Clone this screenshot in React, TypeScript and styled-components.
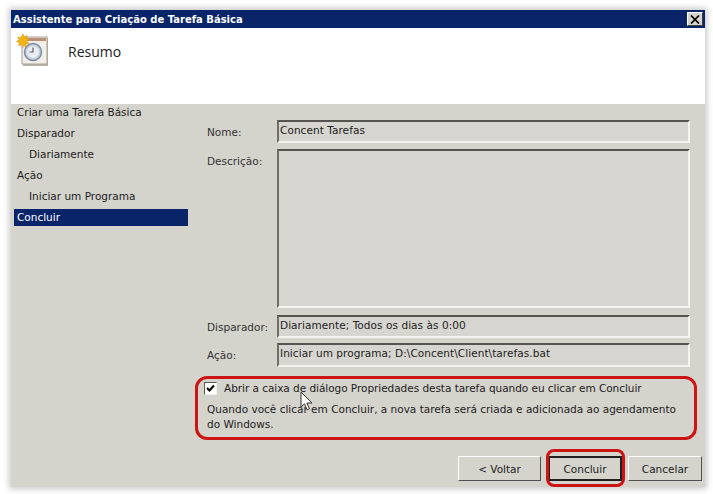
import React from 'react';
import styled, { createGlobalStyle } from 'styled-components';

const GlobalStyle = createGlobalStyle`
  html, body {
    margin: 0;
    padding: 0;
    background: #fff;
  }
  body {
    font-family: 'DejaVu Sans', Verdana, sans-serif;
    font-size: 10.5px;
    color: #1c1c1c;
  }
`;

const Page = styled.div`
  width: 713px;
  height: 494px;
  box-sizing: border-box;
  padding: 10px 8px 7px 11px;
  overflow: hidden;
`;

const Window = styled.div`
  position: relative;
  height: 100%;
  display: flex;
  flex-direction: column;
  background: #d4d3cc;
  box-shadow: 0 0 6px 2px rgba(120, 120, 120, 0.4);
`;

const TitleBar = styled.div`
  height: 18px;
  flex: none;
  display: flex;
  align-items: center;
  justify-content: space-between;
  padding: 0 2px;
  background: #0a246a;
  color: #fff;
  font-weight: bold;
  font-size: 10px;
`;

const CloseButton = styled.div`
  width: 16px;
  height: 14px;
  display: flex;
  align-items: center;
  justify-content: center;
  background: #d4d3cc;
  border: 1px solid;
  border-color: #fff #404040 #404040 #fff;
  box-sizing: border-box;
`;

const Header = styled.div`
  height: 76px;
  flex: none;
  display: flex;
  align-items: flex-start;
  background: #fff;
  padding: 6px 0 0 5px;
  box-sizing: border-box;
`;

const HeaderTitle = styled.div`
  margin: 8px 0 0 20px;
  font-family: 'Open Sans', sans-serif;
  font-size: 14px;
  color: #222;
`;

const Body = styled.div`
  flex: 1;
  display: flex;
  min-height: 0;
`;

const Sidebar = styled.ul`
  width: 174px;
  flex: none;
  margin: 0 0 0 3px;
  padding: 0;
  list-style: none;
  display: flex;
  flex-direction: column;
  gap: 4px;
`;

const SidebarItem = styled.li<{ $sub?: boolean; $active?: boolean }>`
  height: 17px;
  line-height: 17px;
  padding-left: ${(p) => (p.$sub ? 15 : 3)}px;
  background: ${(p) => (p.$active ? '#0a246a' : 'transparent')};
  color: ${(p) => (p.$active ? '#fff' : '#1c1c1c')};
`;

const Content = styled.div`
  flex: 1;
  min-width: 0;
  padding: 16px 15px 0 19px;
  display: flex;
  flex-direction: column;
`;

const FormRow = styled.div<{ $gap: number; $height: number }>`
  display: grid;
  grid-template-columns: 70px 1fr;
  height: ${(p) => p.$height}px;
  margin-bottom: ${(p) => p.$gap}px;
`;

const Label = styled.div`
  padding-top: 6px;
  color: #333;
`;

const Field = styled.div`
  box-sizing: border-box;
  height: 100%;
  padding: 1px 1px;
  background: #d6d5cf;
  border: 2px solid;
  border-color: #55554f #f4f3ef #f4f3ef #6e6e68;
  line-height: 14px;
  color: #222;
  white-space: nowrap;
  letter-spacing: 0.06px;
`;

const Options = styled.div`
  margin-top: 13px;
`;

const CheckRow = styled.div`
  display: flex;
  align-items: center;
  gap: 7px;
  height: 16px;
  margin-left: -3px;
`;

const CheckBox = styled.div`
  width: 13px;
  height: 13px;
  box-sizing: border-box;
  background: #fff;
  border: 1px solid;
  border-color: #5a5a55 #eee #eee #5a5a55;
  display: flex;
  align-items: center;
  justify-content: center;
`;

const CheckLabel = styled.span`
  letter-spacing: -0.04px;
`;

const Note = styled.p`
  margin: 6px 0 0;
  line-height: 15px;
  width: 480px;
`;

const Footer = styled.div`
  padding: 0 3px 6px 0;
  display: flex;
  justify-content: flex-end;
  position: absolute;
  right: 0;
  bottom: 0;
`;

const Buttons = styled.div`
  display: flex;
  gap: 6px;
`;

const Button = styled.button<{ $primary?: boolean; $width: number }>`
  width: ${(p) => p.$width}px;
  height: 25px;
  margin-left: ${(p) => (p.$primary ? 1 : 0)}px;
  padding: 0;
  background: #d4d3cc;
  font: inherit;
  color: #222;
  box-sizing: border-box;
  border: ${(p) => (p.$primary ? '2px' : '1px')} solid;
  border-color: ${(p) => (p.$primary ? '#202020' : '#fff #505050 #505050 #fff')};
`;

const Highlight = styled.div<{ $left: number; $top: number; $width: number; $height: number; $radius: number }>`
  position: absolute;
  left: ${(p) => p.$left}px;
  top: ${(p) => p.$top}px;
  width: ${(p) => p.$width}px;
  height: ${(p) => p.$height}px;
  box-sizing: border-box;
  border: 3px solid #cc1414;
  border-radius: ${(p) => p.$radius}px;
  pointer-events: none;
`;

const Cursor = styled.svg`
  position: absolute;
  left: 289px;
  top: 381px;
`;

const TaskIcon = () => (
  <svg width="32" height="32" viewBox="0 0 32 32">
    <rect x="7" y="4" width="25" height="28" fill="#b8b3aa" />
    <rect x="6" y="3" width="25" height="27" fill="#f2efe9" stroke="#a89f92" />
    <rect x="7" y="4" width="23" height="3" fill="#b9907a" />
    <circle cx="17" cy="18" r="8.5" fill="#c3d0de" stroke="#7f8c9b" strokeWidth="1.5" />
    <circle cx="17" cy="18" r="6" fill="#e8edf1" />
    <path d="M17 13.5V18H13.5" fill="none" stroke="#6a5a45" strokeWidth="1.2" />
    <path
      d="M7 0l1.3 3 2.8-1.6-.8 3.2 3.2.6-2.6 2 2.2 2.4-3.3.1.3 3.3-2.7-1.9L7 13.5 5.6 10.6l-3 1.3.7-3.2L.5 7.5l2.8-1.7L1.5 3l3.2.5z"
      fill="#f3b516"
      stroke="#e08a10"
      strokeWidth="0.5"
    />
  </svg>
);

const App: React.FC = () => (
  <>
    <GlobalStyle />
    <Page>
      <Window>
        <TitleBar>
          <span>Assistente para Criação de Tarefa Básica</span>
          <CloseButton>
            <svg width="10" height="9" viewBox="0 0 10 9">
              <path d="M1 0.5l8 8M9 0.5l-8 8" stroke="#000" strokeWidth="1.7" />
            </svg>
          </CloseButton>
        </TitleBar>
        <Header>
          <TaskIcon />
          <HeaderTitle>Resumo</HeaderTitle>
        </Header>
        <Body>
          <Sidebar>
            <SidebarItem>Criar uma Tarefa Básica</SidebarItem>
            <SidebarItem>Disparador</SidebarItem>
            <SidebarItem $sub>Diariamente</SidebarItem>
            <SidebarItem>Ação</SidebarItem>
            <SidebarItem $sub>Iniciar um Programa</SidebarItem>
            <SidebarItem $active>Concluir</SidebarItem>
          </Sidebar>
          <Content>
            <FormRow $height={23} $gap={6}>
              <Label>Nome:</Label>
              <Field>Concent Tarefas</Field>
            </FormRow>
            <FormRow $height={159} $gap={7}>
              <Label>Descrição:</Label>
              <Field />
            </FormRow>
            <FormRow $height={23} $gap={5}>
              <Label>Disparador:</Label>
              <Field>Diariamente; Todos os dias às 0:00</Field>
            </FormRow>
            <FormRow $height={24} $gap={0}>
              <Label>Ação:</Label>
              <Field>Iniciar um programa; D:\Concent\Client\tarefas.bat</Field>
            </FormRow>
            <Options>
              <CheckRow>
                <CheckBox>
                  <svg width="9" height="9" viewBox="0 0 9 9">
                    <path d="M1 4l2.5 2.5L8 1.5" fill="none" stroke="#000" strokeWidth="2" />
                  </svg>
                </CheckBox>
                <CheckLabel>Abrir a caixa de diálogo Propriedades desta tarefa quando eu clicar em Concluir</CheckLabel>
              </CheckRow>
              <Note>
                Quando você clicar em Concluir, a nova tarefa será criada e adicionada ao agendamento do Windows.
              </Note>
            </Options>
          </Content>
        </Body>
        <Footer>
          <Buttons>
            <Button $width={83}>&lt; Voltar</Button>
            <Button $primary $width={74}>Concluir</Button>
            <Button $width={74}>Cancelar</Button>
          </Buttons>
        </Footer>
        <Highlight $left={184} $top={366} $width={502} $height={64} $radius={12} />
        <Highlight $left={535} $top={439} $width={79} $height={38} $radius={8} />
        <Cursor width="13" height="20" viewBox="0 0 13 20">
          <path d="M1 1v15l3.5-3.2 2.6 6 2.4-1-2.6-5.8H12z" fill="#fff" stroke="#333" strokeWidth="1" />
        </Cursor>
      </Window>
    </Page>
  </>
);

export default App;
